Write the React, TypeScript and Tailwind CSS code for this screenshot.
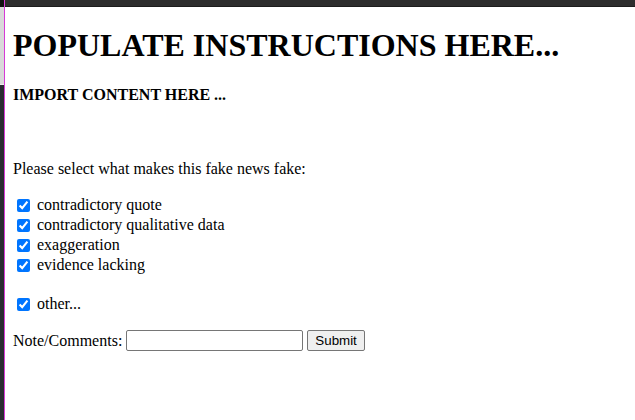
import { useState } from 'react';

const reasons = [
  'contradictory quote',
  'contradictory qualitative data',
  'exaggeration',
  'evidence lacking',
];

const CheckRow = ({ label }: { label: string }) => {
  const [checked, setChecked] = useState(true);

  return (
    <label className="flex items-center h-[20px] pl-[4px]">
      <input
        type="checkbox"
        checked={checked}
        onChange={() => setChecked(!checked)}
        className="w-[13px] h-[13px] m-0 mr-[7px] accent-[#0075ff]"
      />
      <span>{label}</span>
    </label>
  );
};

const App = () => {
  const [note, setNote] = useState('');

  return (
    <div className="flex w-[635px] h-[420px] overflow-hidden bg-white">
      <div className="flex flex-col w-[4px] shrink-0">
        <div className="h-[7px] bg-[#111111]"></div>
        <div className="h-[78px] bg-[#d9d9d9] border-b border-[#eeeeee]"></div>
        <div className="flex-1 bg-[#2a2c31]"></div>
      </div>
      <div className="w-[1px] shrink-0 bg-[#d63ad6]"></div>
      <div className="flex flex-col flex-1">
        <div className="h-[7px] bg-[#2d2d2d] border-b border-[#1c1c1c]"></div>
        <div className="flex flex-col px-[8px] text-black text-[16px] leading-[18.4px] font-['Liberation_Serif',serif]">
          <h1 className="mt-[20px] text-[32px] leading-[37px] font-bold">POPULATE INSTRUCTIONS HERE...</h1>
          <h4 className="mt-[22px] text-[16px] leading-[18.4px] font-bold">IMPORT CONTENT HERE ...</h4>
          <p className="mt-[55.6px]">Please select what makes this fake news fake:</p>
          <div className="flex flex-col mt-[17px]">
            {reasons.map((r) => (
              <CheckRow key={r} label={r} />
            ))}
          </div>
          <div className="mt-[19px]">
            <CheckRow label="other..." />
          </div>
          <div className="flex items-center mt-[16px] h-[21px]">
            <span>Note/Comments:</span>
            <input
              type="text"
              value={note}
              onChange={(e) => setNote(e.target.value)}
              className="ml-[4px] w-[177px] h-[21px] border border-[#767676] rounded-[2px] px-[2px] text-[13px] font-['Liberation_Sans',sans-serif]"
            />
            <button className="ml-[4px] h-[21px] px-[7px] bg-[#efefef] border border-[#767676] rounded-[2px] text-[13.33px] leading-[15px] font-['Liberation_Sans',sans-serif]">
              Submit
            </button>
          </div>
        </div>
      </div>
    </div>
  );
};

export default App;
